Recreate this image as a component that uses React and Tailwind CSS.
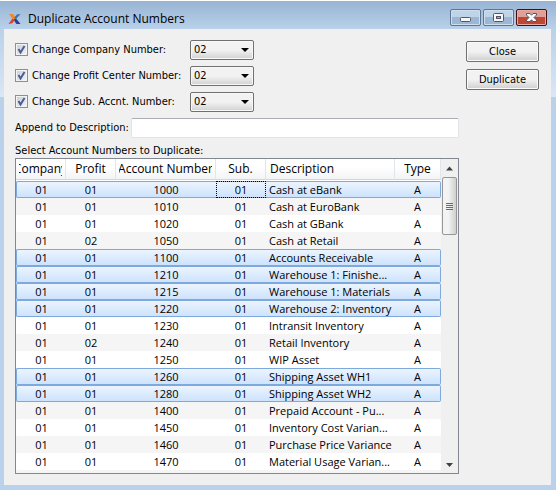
import { useState } from "react";

const ACCOUNTS = [
  ["01", "01", "1000", "01", "Cash at eBank", "A", true],
  ["01", "01", "1010", "01", "Cash at EuroBank", "A", false],
  ["01", "01", "1020", "01", "Cash at GBank", "A", false],
  ["01", "02", "1050", "01", "Cash at Retail", "A", false],
  ["01", "01", "1100", "01", "Accounts Receivable", "A", true],
  ["01", "01", "1210", "01", "Warehouse 1: Finishe...", "A", true],
  ["01", "01", "1215", "01", "Warehouse 1: Materials", "A", true],
  ["01", "01", "1220", "01", "Warehouse 2: Inventory", "A", true],
  ["01", "01", "1230", "01", "Intransit Inventory", "A", false],
  ["01", "02", "1240", "01", "Retail Inventory", "A", false],
  ["01", "01", "1250", "01", "WIP Asset", "A", false],
  ["01", "01", "1260", "01", "Shipping Asset WH1", "A", true],
  ["01", "01", "1280", "01", "Shipping Asset WH2", "A", true],
  ["01", "01", "1400", "01", "Prepaid Account - Pu...", "A", false],
  ["01", "01", "1450", "01", "Inventory Cost Varian...", "A", false],
  ["01", "01", "1460", "01", "Purchase Price Variance", "A", false],
  ["01", "01", "1470", "01", "Material Usage Varian...", "A", false],
];

const COLUMNS = ["Company", "Profit", "Account Number", "Sub.", "Description", "Type"];

const OPTIONS = [
  { id: "company", label: "Change Company Number:" },
  { id: "profit", label: "Change Profit Center Number:" },
  { id: "sub", label: "Change Sub. Accnt. Number:" },
];

function AppLogo() {
  return (
    <svg className="mt-[7px]" width="13" height="10" viewBox="0 0 14 12" preserveAspectRatio="none" aria-hidden="true">
      <path d="M1 0 L5.5 0 L9 5 L6 7.5 Z" fill="#ee8a2c" />
      <path d="M6 7 L8.5 5 L13.5 12 L9 12 Z" fill="#2a3f9c" />
      <path d="M13.5 0 L9.5 0.5 L6.8 4.5 L8.6 6 Z" fill="#2f74bb" />
      <path d="M0.5 12 L4.8 5.5 L7.2 7.5 L4.5 11 Z" fill="#dd3f2b" />
    </svg>
  );
}

function MinimizeIcon() {
  return (
    <svg width="12" height="12" viewBox="0 0 12 12" aria-hidden="true">
      <rect x="0.5" y="5.5" width="10" height="4" rx="1" fill="#f6f6f6" stroke="#535666" />
    </svg>
  );
}

function MaximizeIcon() {
  return (
    <svg width="12" height="12" viewBox="0 0 12 12" aria-hidden="true">
      <rect x="0.5" y="1.5" width="10" height="8" rx="1" fill="#f6f6f6" stroke="#535666" />
      <rect x="3.5" y="4.5" width="4" height="2" fill="#8fa9c8" stroke="#535666" />
    </svg>
  );
}

function CloseIcon() {
  return (
    <svg width="12" height="12" viewBox="0 0 12 12" aria-hidden="true">
      <path
        d="M0.5 1.5 H4 L5.5 3.2 L7 1.5 H10.5 V3 L8 5.5 L10.5 8 V9.5 H7 L5.5 7.8 L4 9.5 H0.5 V8 L3 5.5 L0.5 3 Z"
        fill="#fafafa"
        stroke="#535666"
      />
    </svg>
  );
}

function TitleBar() {
  const plain =
    "flex h-[17px] w-[31px] items-center justify-center rounded-xs border border-[#5d7590] bg-linear-to-b from-[#c0d4e9] from-50% to-[#9cb7d4] to-50% shadow-[inset_0_0_0_1px_#d0dff0]";
  return (
    <header className="flex h-[29px] items-center border-t border-white bg-linear-to-b from-[#98b4d3] to-[#b9d1ea] pr-[9px] pl-2">
      <AppLogo />
      <h1 className="ml-[7px] flex-1 pt-2 font-['Open_Sans',sans-serif] text-[12px] leading-4 font-normal text-black">
        Duplicate Account Numbers
      </h1>
      <div className="flex gap-[2px] pt-[5px]">
        <button type="button" aria-label="Minimize" className={plain}>
          <MinimizeIcon />
        </button>
        <button type="button" aria-label="Maximize" className={plain}>
          <MaximizeIcon />
        </button>
        <button
          type="button"
          aria-label="Close window"
          className="flex h-[17px] w-[31px] items-center justify-center rounded-xs border border-[#43101a] bg-linear-to-b from-[#e0a097] from-50% to-[#bf4632] to-50% shadow-[inset_0_0_0_1px_#e5aaa0]"
        >
          <CloseIcon />
        </button>
      </div>
    </header>
  );
}

function CheckBox({ id }) {
  return (
    <span className="relative mb-px block size-[13px]">
      <input
        id={id}
        type="checkbox"
        defaultChecked
        className="peer block size-[13px] appearance-none border border-[#8e8f8f] bg-linear-to-br from-[#c9ced6] to-[#f4f5f6] shadow-[inset_0_0_0_1px_#f4f4f4]"
      />
      <svg
        className="pointer-events-none absolute inset-0 hidden peer-checked:block"
        width="13"
        height="13"
        viewBox="0 0 13 13"
        aria-hidden="true"
      >
        <path d="M3.5 6 L5.5 9.5 L9.5 3" fill="none" stroke="#4a5f97" strokeWidth="2" />
      </svg>
    </span>
  );
}

function OptionRow({ id, label }) {
  return (
    <div className="flex h-5 items-center">
      <CheckBox id={id} />
      <label htmlFor={id} className="w-[162px] pl-1">
        {label}
      </label>
      <span className="relative block">
        <select
          aria-label={label}
          defaultValue="02"
          className="block h-5 w-16 appearance-none rounded-xs border border-[#707070] bg-linear-to-b from-[#f2f2f2] from-50% to-[#d2d2d2] px-[3px] leading-[18px] shadow-[inset_0_0_0_1px_#f8f8f8]"
        >
          <option>01</option>
          <option>02</option>
        </select>
        <svg
          className="pointer-events-none absolute top-2 right-[5px]"
          width="8"
          height="4"
          viewBox="0 0 8 4"
          aria-hidden="true"
        >
          <path d="M0 0 H8 L4 4 Z" fill="#000" />
        </svg>
      </span>
    </div>
  );
}

function PushButton({ children }) {
  return (
    <button
      type="button"
      className="h-[21px] w-[73px] rounded-xs border border-[#707070] bg-linear-to-b from-[#f2f2f2] from-50% to-[#cfcfcf] shadow-[inset_0_0_0_1px_#fafafa]"
    >
      {children}
    </button>
  );
}

function AccountRow({ account, index, selected, onToggle }) {
  const tone = selected
    ? "bg-linear-to-b from-[#ecf4fe] to-[#cde3fd] border-[#7da9dc]"
    : index % 2 === 1
      ? "bg-[#f5f5f5] border-transparent"
      : "bg-white border-transparent";
  const focus =
    index === 0
      ? "outline-1 -outline-offset-1 outline-dotted outline-black"
      : "";
  const cell = `h-[17px] border-y p-0 text-center leading-[15px] ${tone}`;
  return (
    <tr aria-selected={selected} onClick={onToggle}>
      <td className={`${cell} rounded-l-xs border-l`}>{account[0]}</td>
      <td className={cell}>{account[1]}</td>
      <td className={cell}>{account[2]}</td>
      <td className={`${cell} ${focus}`}>{account[3]}</td>
      <td className={`${cell} pl-[3px] text-left! text-nowrap`}>{account[4]}</td>
      <td className={`${cell} rounded-r-xs border-r`}>{account[5]}</td>
    </tr>
  );
}

function ScrollBar() {
  return (
    <div className="flex w-[17px] flex-col items-center bg-[#f0f0f0]" aria-hidden="true">
      <svg width="17" height="18" viewBox="0 0 17 18">
        <path d="M5 11.5 L8.5 7.5 L12 11.5 Z" fill="#404040" />
      </svg>
      <div className="flex h-[58px] w-[15px] flex-col items-center justify-center gap-px rounded-xs border border-[#979797] bg-linear-to-r from-[#f3f3f3] from-40% to-[#cfcfd0]">
        <span className="h-px w-[7px] bg-[#6b6b6b]" />
        <span className="h-px w-[7px] bg-[#6b6b6b]" />
        <span className="h-px w-[7px] bg-[#6b6b6b]" />
        <span className="h-px w-[7px] bg-[#6b6b6b]" />
      </div>
      <div className="flex-1" />
      <svg width="17" height="17" viewBox="0 0 17 17">
        <path d="M5 7 L12 7 L8.5 11 Z" fill="#404040" />
      </svg>
    </div>
  );
}

function AccountTable() {
  const [selected, setSelected] = useState(ACCOUNTS.map((account) => account[6]));
  const toggle = (row) => setSelected(selected.map((on, i) => (i === row ? !on : on)));
  return (
    <div className="flex min-h-0 flex-1 border border-[#828790] bg-white">
      <div className="min-w-0 flex-1 overflow-hidden bg-[#f5f5f5]">
        <table
          aria-labelledby="accounts-label"
          className="w-full table-fixed border-separate border-spacing-0 font-['Open_Sans',sans-serif] text-[11px]"
        >
          <colgroup>
            <col className="w-[50px]" />
            <col className="w-[50px]" />
            <col className="w-[100px]" />
            <col className="w-[50px]" />
            <col />
            <col className="w-[46px]" />
          </colgroup>
          <thead className="text-[12px]">
            <tr>
              {COLUMNS.map((name) => (
                <th
                  key={name}
                  className="h-[21px] border-r border-b border-r-[#e3e6e9] border-b-[#d5d5d5] bg-linear-to-b from-white from-40% to-[#f3f4f6] px-[3px] py-0 font-normal"
                >
                  <span
                    className={
                      name === "Description"
                        ? "block pl-px text-left leading-5"
                        : "flex justify-center overflow-hidden leading-5 text-nowrap"
                    }
                  >
                    {name}
                  </span>
                </th>
              ))}
            </tr>
            <tr aria-hidden="true">
              <td colSpan={6} className="h-px bg-white p-0" />
            </tr>
          </thead>
          <tbody>
            {ACCOUNTS.map((account, index) => (
              <AccountRow
                key={account[2]}
                account={account}
                index={index}
                selected={selected[index]}
                onToggle={() => toggle(index)}
              />
            ))}
          </tbody>
        </table>
      </div>
      <ScrollBar />
    </div>
  );
}

export default function App() {
  return (
    <div className="flex h-screen flex-col bg-[linear-gradient(to_bottom,#b9d1ea_29px,#dae7f5_97px,#b9d1ea_97px)] font-['DejaVu_Sans_Condensed','DejaVu_Sans',sans-serif] text-[11px] leading-[14px] text-black">
      <TitleBar />
      <main className="mr-[5px] mb-[5px] ml-1 flex min-h-0 flex-1 gap-[7px] bg-[#f0f0f0] pt-[11px] pr-3 pb-[11px] pl-[11px]">
        <div className="flex min-w-0 flex-1 flex-col">
          <div className="flex flex-col gap-[6px]">
            {OPTIONS.map((option) => (
              <OptionRow key={option.id} id={option.id} label={option.label} />
            ))}
          </div>
          <div className="mt-[6px] flex items-center">
            <label htmlFor="append" className="w-[116px] text-nowrap">
              Append to Description:
            </label>
            <input
              id="append"
              type="text"
              className="h-5 min-w-0 flex-1 rounded-xs border border-[#e2e3ea] border-t-[#abadb3] bg-white px-1"
            />
          </div>
          <p id="accounts-label" className="mt-[6px]">
            Select Account Numbers to Duplicate:
          </p>
          <AccountTable />
        </div>
        <div className="flex flex-col gap-[7px] pt-px">
          <PushButton>Close</PushButton>
          <PushButton>Duplicate</PushButton>
        </div>
      </main>
    </div>
  );
}
